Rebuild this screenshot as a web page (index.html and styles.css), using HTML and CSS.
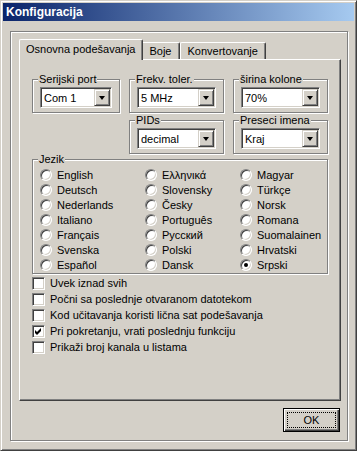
FILE: index.html
```html
<!DOCTYPE html>
<html lang="sr">
<head>
  <meta charset="UTF-8">
  <meta name="viewport" content="width=device-width, initial-scale=1.0">
  <title>Konfiguracija</title>
  <link rel="stylesheet" href="styles.css">
</head>
<body>
  <div class="window">
    <div class="titlebar">Konfiguracija</div>

    <div class="panel">
      <div class="tabs">
        <div class="tab active">Osnovna podešavanja</div>
        <div class="tab">Boje</div>
        <div class="tab">Konvertovanje</div>
      </div>

      <div class="sheet">
        <div class="top-groups">
          <div class="group">
            <div class="group-title">Serijski port</div>
            <div class="combo"><span class="combo-value">Com 1</span><span class="combo-btn"></span></div>
          </div>
          <div class="group">
            <div class="group-title">Frekv. toler.</div>
            <div class="combo"><span class="combo-value">5 MHz</span><span class="combo-btn"></span></div>
          </div>
          <div class="group">
            <div class="group-title">širina kolone</div>
            <div class="combo"><span class="combo-value">70%</span><span class="combo-btn"></span></div>
          </div>
          <div class="group col-2">
            <div class="group-title">PIDs</div>
            <div class="combo"><span class="combo-value">decimal</span><span class="combo-btn"></span></div>
          </div>
          <div class="group">
            <div class="group-title">Preseci imena</div>
            <div class="combo"><span class="combo-value">Kraj</span><span class="combo-btn"></span></div>
          </div>
        </div>

        <div class="group lang">
          <div class="group-title">Jezik</div>
          <div class="radios">
            <div class="option"><span class="radio"></span>English</div>
            <div class="option"><span class="radio"></span>Ελληνικά</div>
            <div class="option"><span class="radio"></span>Magyar</div>
            <div class="option"><span class="radio"></span>Deutsch</div>
            <div class="option"><span class="radio"></span>Slovensky</div>
            <div class="option"><span class="radio"></span>Türkçe</div>
            <div class="option"><span class="radio"></span>Nederlands</div>
            <div class="option"><span class="radio"></span>Česky</div>
            <div class="option"><span class="radio"></span>Norsk</div>
            <div class="option"><span class="radio"></span>Italiano</div>
            <div class="option"><span class="radio"></span>Português</div>
            <div class="option"><span class="radio"></span>Romana</div>
            <div class="option"><span class="radio"></span>Français</div>
            <div class="option"><span class="radio"></span>Русский</div>
            <div class="option"><span class="radio"></span>Suomalainen</div>
            <div class="option"><span class="radio"></span>Svenska</div>
            <div class="option"><span class="radio"></span>Polski</div>
            <div class="option"><span class="radio"></span>Hrvatski</div>
            <div class="option"><span class="radio"></span>Español</div>
            <div class="option"><span class="radio"></span>Dansk</div>
            <div class="option"><span class="radio checked"></span>Srpski</div>
          </div>
        </div>

        <div class="checks">
          <div class="check-row"><span class="checkbox"></span>Uvek iznad svih</div>
          <div class="check-row"><span class="checkbox"></span>Počni sa poslednje otvaranom datotekom</div>
          <div class="check-row"><span class="checkbox"></span>Kod učitavanja koristi lična sat podešavanja</div>
          <div class="check-row">
            <span class="checkbox"><svg width="9" height="9" viewBox="0 0 9 9"><polygon points="1,3 3,5 7,1 7,4 3,8 1,6" fill="#000"/></svg></span>Pri pokretanju, vrati poslednju funkciju
          </div>
          <div class="check-row"><span class="checkbox"></span>Prikaži broj kanala u listama</div>
        </div>
      </div>

      <div class="buttons">
        <button class="btn default"><span class="focus">OK</span></button>
      </div>
    </div>
  </div>
</body>
</html>
```

FILE: styles.css
```css
body {
  margin: 0;
  background: #d4d0c8;
  font-family: "Liberation Sans", Arial, sans-serif;
  font-size: 11px;
  color: #000;
}
.window {
  width: 357px;
  height: 451px;
  box-sizing: border-box;
  display: flex;
  flex-direction: column;
  padding: 2px;
  background: #d4d0c8;
  border: 1px solid;
  border-color: #d4d0c8 #404040 #404040 #d4d0c8;
  box-shadow: inset 1px 1px #fff, inset -1px -1px #808080;
}
.titlebar {
  height: 18px;
  line-height: 18px;
  padding-left: 3px;
  color: #fff;
  font-weight: bold;
  font-size: 12px;
  background: linear-gradient(to right, #0a246a, #a6caf0);
}
.panel {
  flex: 1;
  display: flex;
  flex-direction: column;
  margin: 10px 6px 7px 7px;
  padding: 7px 6px 8px 8px;
  border: 1px solid #808080;
  box-shadow: inset 1px 1px #fff, 1px 1px #fff;
}
.tabs {
  display: flex;
  align-items: flex-end;
  height: 20px;
  padding-left: 2px;
}
.tab {
  box-sizing: border-box;
  height: 17px;
  padding: 2px 7px 0;
  line-height: 13px;
  border-top: 1px solid #fff;
  border-left: 1px solid #fff;
  border-right: 1px solid #404040;
  border-radius: 2px 2px 0 0;
  box-shadow: inset -1px 0 #808080;
  white-space: nowrap;
}
.tab.active {
  position: relative;
  z-index: 1;
  height: 21px;
  margin: 0 -2px -1px;
  padding: 3px 7px 0 6px;
  background: #d4d0c8;
}
.sheet {
  flex: 1;
  padding: 19px 12px 0;
  border: 1px solid;
  border-color: #fff #404040 #404040 #fff;
  box-shadow: inset -1px -1px #808080;
}
.top-groups {
  display: grid;
  grid-template-columns: 88px 95px 95px;
  column-gap: 9px;
  row-gap: 7px;
}
.col-2 {
  grid-column: 2;
}
.group {
  padding: 0 7px 4px;
  border: 1px solid #808080;
  box-shadow: inset 1px 1px #fff, 1px 1px #fff;
}
.group-title {
  display: table;
  margin: -7px 0 1px -2px;
  padding: 0 1px;
  line-height: 13px;
  background: #d4d0c8;
}
.combo {
  box-sizing: border-box;
  height: 21px;
  display: flex;
  align-items: center;
  background: #fff;
  border: 1px solid;
  border-color: #808080 #fff #fff #808080;
  box-shadow: inset 1px 1px #404040, inset -1px -1px #d4d0c8;
}
.combo-value {
  flex: 1;
  padding-left: 3px;
}
.combo-btn {
  box-sizing: border-box;
  width: 16px;
  height: 17px;
  margin-right: 1px;
  display: flex;
  align-items: center;
  justify-content: center;
  background: #d4d0c8;
  border: 1px solid;
  border-color: #d4d0c8 #404040 #404040 #d4d0c8;
  box-shadow: inset 1px 1px #fff, inset -1px -1px #808080;
}
.combo-btn::after {
  content: "";
  border-left: 3.5px solid transparent;
  border-right: 3.5px solid transparent;
  border-top: 4px solid #000;
}
.lang {
  margin-top: 5px;
  padding-bottom: 1px;
}
.radios {
  display: grid;
  grid-template-columns: 105px 95px 1fr;
}
.option {
  height: 15px;
  display: flex;
  align-items: center;
  gap: 5px;
  white-space: nowrap;
}
.radio {
  box-sizing: border-box;
  width: 12px;
  height: 12px;
  display: flex;
  align-items: center;
  justify-content: center;
  border-radius: 50%;
  background: #fff;
  border: 1px solid;
  border-color: #808080 #fff #fff #808080;
  box-shadow: inset 1px 1px #404040, inset -1px -1px #d4d0c8;
}
.radio.checked::after {
  content: "";
  width: 4px;
  height: 4px;
  border-radius: 50%;
  background: #000;
}
.checks {
  margin-top: 1px;
}
.check-row {
  height: 16px;
  display: flex;
  align-items: center;
  gap: 5px;
  white-space: nowrap;
}
.checkbox {
  box-sizing: border-box;
  width: 13px;
  height: 13px;
  padding: 1px;
  background: #fff;
  border: 1px solid;
  border-color: #808080 #fff #fff #808080;
  box-shadow: inset 1px 1px #404040, inset -1px -1px #d4d0c8;
}
.checkbox svg {
  display: block;
}
.buttons {
  display: flex;
  justify-content: flex-end;
  margin-top: 7px;
  padding-right: 1px;
}
.btn {
  box-sizing: border-box;
  width: 57px;
  height: 24px;
  padding: 3px;
  font: inherit;
  background: #d4d0c8;
  border: 1px solid #000;
  box-shadow: inset 1px 1px #fff, inset -1px -1px #404040, inset -2px -2px #808080;
}
.focus {
  display: block;
  height: 100%;
  box-sizing: border-box;
  line-height: 14px;
  border: 1px dotted #000;
}
```
